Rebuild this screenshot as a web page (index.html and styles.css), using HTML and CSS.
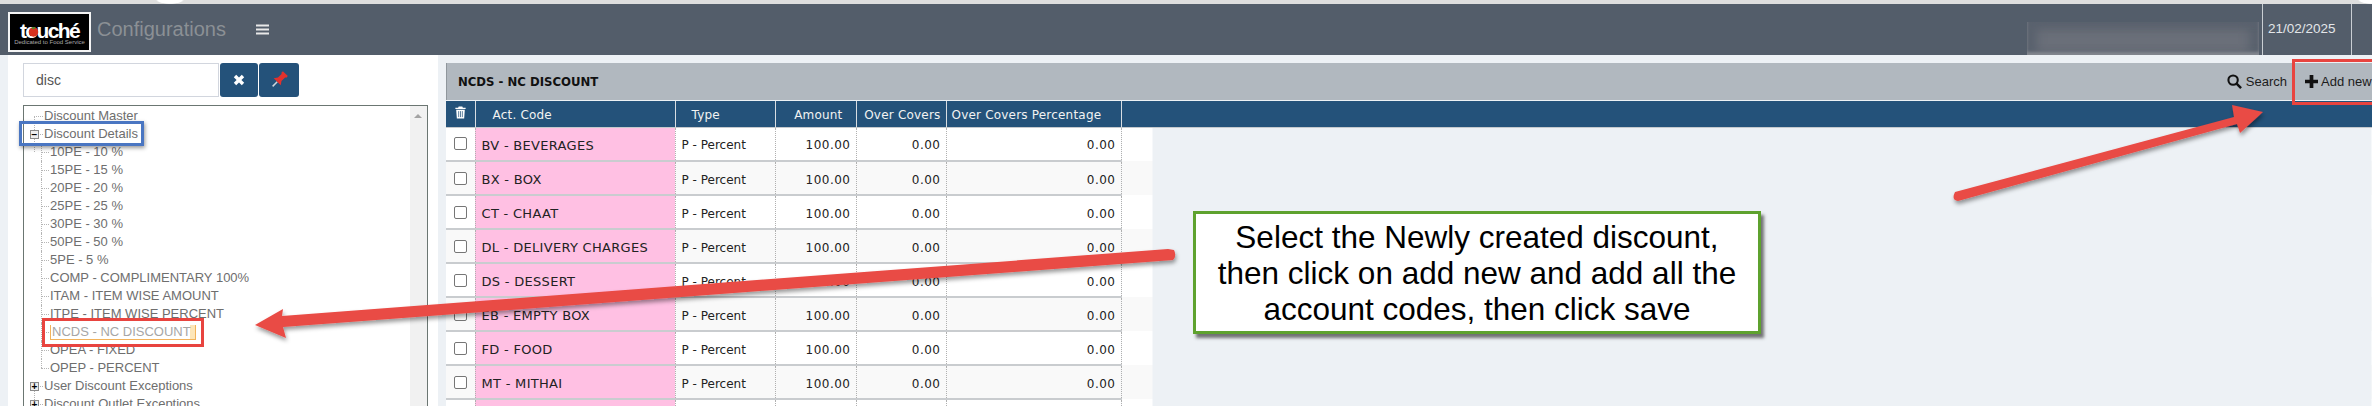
FILE: index.html
```html
<!DOCTYPE html>
<html lang="en">
<head>
    <meta charset="UTF-8">
    <title>Configurations</title>
    <link rel="stylesheet" href="styles.css">
</head>
<body>
    <div class="topstrip"></div>
    <nav class="navbar">
        <div class="logo">
            <span class="logo-name">touché</span>
            <span class="logo-sub">Dedicated to Food Service</span>
            <svg class="logo-tomato" viewBox="0 0 12 12"><circle cx="6" cy="6.500" r="5.200" fill="#d8321f"/><path d="M3.500 2.500 L6 3.500 L8.500 2.500 L7 1.200 L5 1.200 Z" fill="#4f8a2a"/></svg>
        </div>
        <span class="nav-title">Configurations</span>
        <svg class="nav-burger" viewBox="0 0 13 11"><path d="M0 0.500h13v2h-13zM0 4.500h13v2h-13zM0 8.500h13v2h-13z" fill="#e8e8e8"/></svg>
        <div class="nav-right">
            <div class="nav-blur"></div>
            <div class="nav-date">21/02/2025</div>
            <div class="nav-end"></div>
        </div>
    </nav>

    <div class="main">
        <aside class="side">
            <div class="search-row">
                <input class="search-input" type="text" value="disc">
                <button class="icon-btn btn-clear">
                    <svg viewBox="0 0 12 12" width="12" height="12"><path d="M0.800 3.200 L3.200 0.800 L6 3.600 L8.800 0.800 L11.200 3.200 L8.400 6 L11.200 8.800 L8.800 11.200 L6 8.400 L3.200 11.200 L0.800 8.800 L3.600 6 Z" fill="#fff"/></svg>
                </button>
                <button class="icon-btn btn-pin">
                    <svg viewBox="0 0 18 18" width="18" height="18">
                        <g transform="rotate(45 9 9)">
                            <path d="M9 11.500V18" stroke="#cfd6dc" stroke-width="1.500"/>
                            <path d="M5.500 0h7v2.500h-1V8l2.500 3.500H4L6.500 8V2.500h-1z" fill="#e2312d"/>
                        </g>
                    </svg>
                </button>
            </div>
            <div class="tree-box">
                <ul class="tree">
                    <li class="node"><span class="hline"></span>Discount Master</li>
                    <li class="node"><span class="toggle">−</span><span class="hline"></span>Discount Details</li>
                    <li class="child">10PE - 10 %</li>
                    <li class="child">15PE - 15 %</li>
                    <li class="child">20PE - 20 %</li>
                    <li class="child">25PE - 25 %</li>
                    <li class="child">30PE - 30 %</li>
                    <li class="child">50PE - 50 %</li>
                    <li class="child">5PE - 5 %</li>
                    <li class="child">COMP - COMPLIMENTARY 100%</li>
                    <li class="child">ITAM - ITEM WISE AMOUNT</li>
                    <li class="child">ITPE - ITEM WISE PERCENT</li>
                    <li class="child"><span class="selected">NCDS - NC DISCOUNT</span></li>
                    <li class="child">OPEA - FIXED</li>
                    <li class="child last">OPEP - PERCENT</li>
                    <li class="node"><span class="toggle">+</span><span class="hline"></span>User Discount Exceptions</li>
                    <li class="node"><span class="toggle">+</span><span class="hline"></span>Discount Outlet Exceptions</li>
                </ul>
                <div class="scrollbar"><span class="scroll-up"></span></div>
            </div>
        </aside>

        <section class="content">
            <div class="panel-title">
                <span class="panel-name">NCDS - NC DISCOUNT</span>
                <span class="tool tool-search">
                    <svg viewBox="0 0 16 16" width="15" height="15"><circle cx="6.500" cy="6.500" r="5" fill="none" stroke="#111" stroke-width="2.200"/><path d="M10.200 10.200 L15 15" stroke="#111" stroke-width="2.600"/></svg>
                    Search
                </span>
                <span class="tool tool-add">
                    <svg viewBox="0 0 14 14" width="13" height="13"><path d="M5 0h4v5h5v4h-5v5h-4v-5h-5v-4h5z" fill="#111"/></svg>
                    Add new
                </span>
            </div>
            <table class="grid">
                <thead>
                    <tr>
                        <th class="c-check">
                            <svg viewBox="0 0 12 14" width="11" height="13">
                                <path d="M4 0.500h4l0.600 1.300h3v1.400h-11.200v-1.400h3zM1.300 4h9.400l-0.700 9.500h-8z" fill="#fff"/>
                                <path d="M4 5.500v6.500M6 5.500v6.500M8 5.500v6.500" stroke="#24527a" stroke-width="0.800"/>
                            </svg>
                        </th>
                        <th class="c-code">Act. Code</th>
                        <th class="c-type">Type</th>
                        <th class="c-num c-amount">Amount</th>
                        <th class="c-num c-over">Over Covers</th>
                        <th class="c-pct">Over Covers Percentage</th>
                        <th class="c-fill"></th>
                    </tr>
                </thead>
                <tbody id="rows">
                    <tr><td class="c-check"><span class="box"></span></td><td class="c-code">BV - BEVERAGES</td><td>P - Percent</td><td class="c-num">100.00</td><td class="c-num">0.00</td><td class="c-num">0.00</td><td class="c-pad"></td></tr>
                    <tr><td class="c-check"><span class="box"></span></td><td class="c-code">BX - BOX</td><td>P - Percent</td><td class="c-num">100.00</td><td class="c-num">0.00</td><td class="c-num">0.00</td><td class="c-pad"></td></tr>
                    <tr><td class="c-check"><span class="box"></span></td><td class="c-code">CT - CHAAT</td><td>P - Percent</td><td class="c-num">100.00</td><td class="c-num">0.00</td><td class="c-num">0.00</td><td class="c-pad"></td></tr>
                    <tr><td class="c-check"><span class="box"></span></td><td class="c-code">DL - DELIVERY CHARGES</td><td>P - Percent</td><td class="c-num">100.00</td><td class="c-num">0.00</td><td class="c-num">0.00</td><td class="c-pad"></td></tr>
                    <tr><td class="c-check"><span class="box"></span></td><td class="c-code">DS - DESSERT</td><td>P - Percent</td><td class="c-num">100.00</td><td class="c-num">0.00</td><td class="c-num">0.00</td><td class="c-pad"></td></tr>
                    <tr><td class="c-check"><span class="box"></span></td><td class="c-code">EB - EMPTY BOX</td><td>P - Percent</td><td class="c-num">100.00</td><td class="c-num">0.00</td><td class="c-num">0.00</td><td class="c-pad"></td></tr>
                    <tr><td class="c-check"><span class="box"></span></td><td class="c-code">FD - FOOD</td><td>P - Percent</td><td class="c-num">100.00</td><td class="c-num">0.00</td><td class="c-num">0.00</td><td class="c-pad"></td></tr>
                    <tr><td class="c-check"><span class="box"></span></td><td class="c-code">MT - MITHAI</td><td>P - Percent</td><td class="c-num">100.00</td><td class="c-num">0.00</td><td class="c-num">0.00</td><td class="c-pad"></td></tr>
                    <tr><td class="c-check"><span class="box"></span></td><td class="c-code">&nbsp;</td><td></td><td></td><td></td><td></td><td class="c-pad"></td></tr>
                </tbody>
            </table>
        </section>
    </div>

    <!-- annotations drawn over the screenshot -->
    <div class="mark mark-blue"></div>
    <div class="mark mark-red-node"></div>
    <div class="mark mark-red-add"></div>
    <svg class="arrows" viewBox="0 0 2372 406" width="2372" height="406">
        <defs>
            <filter id="arrowShadow" x="-5%" y="-50%" width="110%" height="200%">
                <feDropShadow dx="1" dy="3" stdDeviation="2" flood-color="#000" flood-opacity="0.4"/>
            </filter>
        </defs>
        <g filter="url(#arrowShadow)" fill="#e94b45">
            <path d="M1174 250 Q1177 256 1173 260 L283 327 L286 338 L255 325 L283 309 L282 316 L1168 249 Z"/>
            <path d="M1955 192 L2234 117 L2232 105 L2263 112 L2240 133 L2237 124 L1958 201 Q1951 200 1955 192 Z"/>
        </g>
    </svg>
    <div class="callout">Select the Newly created discount,<br>then click on add new and add all the<br>account codes, then click save</div>
</body>
</html>
```

FILE: styles.css
```css
html, body {
    margin: 0;
    padding: 0;
}
body {
    width: 2372px;
    height: 406px;
    overflow: hidden;
    position: relative;
    font-family: "Liberation Sans", Arial, sans-serif;
    background-color: #edf1f5;
}
.topstrip {
    height: 4px;
    background-color: #dedede;
    background-image: radial-gradient(ellipse 14px 4px at 170px 0, #fff 85%, transparent 100%), radial-gradient(ellipse 14px 4px at 2372px 0, #fff 85%, transparent 100%);
}
.navbar {
    height: 51px;
    background-color: #535d6a;
    display: flex;
    align-items: center;
    padding-left: 8px;
    box-sizing: border-box;
}
.logo {
    width: 83px;
    height: 40px;
    margin-top: 5px;
    box-sizing: border-box;
    background-color: #000;
    border: 2px solid #f4f4f4;
    position: relative;
    color: #fff;
    text-align: center;
    flex: none;
}
.logo-name {
    display: block;
    font-size: 21px;
    font-weight: bold;
    line-height: 20px;
    margin-top: 7px;
    letter-spacing: -1.6px;
}
.logo-sub {
    display: block;
    font-size: 6px;
    line-height: 6px;
    margin-top: -2px;
    color: #aaa;
    white-space: nowrap;
}
.logo-tomato {
    position: absolute;
    left: 18px;
    top: 12px;
    width: 11px;
    height: 11px;
}
.nav-title {
    margin-left: 6px;
    font-size: 20px;
    color: #8b9095;
}
.nav-burger {
    margin-left: 30px;
    width: 13px;
    height: 11px;
}
.nav-right {
    margin-left: auto;
    height: 100%;
    display: flex;
    align-items: stretch;
}
.nav-blur {
    width: 232px;
    height: 33px;
    align-self: flex-end;
    margin-right: 3px;
    background-color: #6a6f79;
    box-shadow: inset 0 -3px 3px #83878f, inset 10px 0 10px #5a626e, inset -10px 0 10px #5a626e, inset 0 7px 8px #5c636f;
}
.nav-date {
    width: 90px;
    box-sizing: border-box;
    border-left: 1px solid #c9ced3;
    border-right: 1px solid #c9ced3;
    padding-left: 5px;
    font-size: 13.500px;
    color: #e3e6e9;
    line-height: 50px;
}
.nav-end {
    width: 20px;
}
.main {
    display: flex;
    height: 351px;
    overflow: hidden;
}
.side {
    width: 430px;
    margin-left: 8px;
    flex: none;
    background-color: #fff;
    padding: 8px 10px 0 15px;
    box-sizing: border-box;
}
.search-row {
    display: flex;
    gap: 1px;
    height: 34px;
}
.search-input {
    width: 196px;
    box-sizing: border-box;
    border: 1px solid #d2d6de;
    padding: 0 12px;
    font-family: "Liberation Sans", Arial, sans-serif;
    font-size: 14px;
    color: #555;
    background-color: #fff;
    outline: none;
}
.icon-btn {
    border: 0;
    padding: 0;
    background-color: #24527a;
    border-radius: 3px;
    display: flex;
    align-items: center;
    justify-content: center;
}
.btn-clear {
    width: 38px;
}
.btn-pin {
    width: 40px;
}
.tree-box {
    margin-top: 8px;
    width: 405px;
    height: 320px;
    box-sizing: border-box;
    border: 1px solid #6b7672;
    display: flex;
    overflow: hidden;
}
.tree {
    flex: 1;
    list-style: none;
    margin: 0;
    padding: 1px 0 0 0;
    font-size: 13px;
    color: #6e6e6e;
}
.tree li {
    height: 18px;
    line-height: 18px;
    white-space: nowrap;
    position: relative;
}
.node {
    padding-left: 20px;
}
.child {
    padding-left: 26px;
}
.hline {
    position: absolute;
    left: 10px;
    top: 9px;
    width: 9px;
    border-top: 1px dotted #b5b5b5;
}
.node::before {
    content: "";
    position: absolute;
    left: 10px;
    top: 9px;
    height: 18px;
    border-left: 1px dotted #b5b5b5;
}
.child::before {
    content: "";
    position: absolute;
    left: 17px;
    top: 0;
    height: 18px;
    border-left: 1px dotted #b5b5b5;
}
.child.last::before {
    height: 9px;
}
.child::after {
    content: "";
    position: absolute;
    left: 17px;
    top: 9px;
    width: 8px;
    border-top: 1px dotted #b5b5b5;
}
.toggle {
    position: absolute;
    left: 6px;
    top: 5px;
    width: 9px;
    height: 9px;
    box-sizing: border-box;
    border: 1px solid #8a8a8a;
    background-color: #eee;
    color: #000;
    font-size: 10px;
    font-weight: bold;
    line-height: 7px;
    text-align: center;
    z-index: 1;
}
.selected {
    display: inline-block;
    width: 146px;
    height: 15px;
    line-height: 14px;
    box-sizing: border-box;
    border-left: 1px solid #f2b35a;
    border-right: 1px solid #f2b35a;
    border-bottom: 1px solid #f2b35a;
    padding-left: 1px;
    color: #a6a6a6;
    background: linear-gradient(90deg, #fff 0, #fff 139px, #fde6b8 139px);
    vertical-align: top;
    margin-top: 2px;
}
.scrollbar {
    width: 17px;
    background-color: #f1f1f1;
    position: relative;
    flex: none;
}
.scroll-up {
    position: absolute;
    left: 4px;
    top: 8px;
    border-left: 4px solid transparent;
    border-right: 4px solid transparent;
    border-bottom: 4px solid #a3a3a3;
}
.content {
    margin-left: 8px;
    padding-top: 8px;
    flex: 1;
    min-width: 0;
}
.panel-title {
    height: 37px;
    background-color: #b1b8bf;
    border-left: 1px solid #8f969c;
    display: flex;
    align-items: center;
    padding-left: 11px;
    box-sizing: border-box;
}
.panel-name {
    font-family: "DejaVu Sans Condensed", "DejaVu Sans", sans-serif;
    font-size: 13px;
    font-weight: bold;
    color: #111;
    margin-right: auto;
}
.tool {
    display: flex;
    align-items: center;
    gap: 4px;
    font-size: 13px;
    color: #1c1c1c;
    white-space: nowrap;
}
.tool-add {
    margin-left: 18px;
    width: 67px;
    overflow: hidden;
    flex: none;
    gap: 3px;
}
.grid {
    width: 100%;
    table-layout: fixed;
    border-collapse: collapse;
    font-family: "DejaVu Sans", sans-serif;
    font-size: 12px;
    color: #222;
    margin-top: 1px;
}
.grid th {
    height: 26px;
    padding: 2px 5px 0;
    background-color: #24527a;
    color: #f2f2f2;
    font-weight: normal;
    text-align: left;
    letter-spacing: 0.200px;
    border-right: 1px solid #d8dde2;
    border-bottom: 1px solid #c5c9cd;
    white-space: nowrap;
    box-sizing: border-box;
}
.grid th.c-fill {
    border-right: 0;
}
.grid td {
    height: 34px;
    padding: 3px 5px 0 6px;
    border-right: 1px dotted #b0b0b0;
    border-bottom: 2px solid #c9cccf;
    background-color: #fff;
    white-space: nowrap;
    box-sizing: border-box;
}
.grid tbody tr:nth-child(even) td {
    background-color: #f9f9f9;
}
.grid td.c-pad {
    border: 0;
    background: linear-gradient(90deg, #fff 0, #fff 31px, #edf1f5 31px);
}
.grid tbody tr:nth-child(even) td.c-pad {
    background: linear-gradient(90deg, #f9f9f9 0, #f9f9f9 31px, #edf1f5 31px);
}
.c-check {
    width: 29px;
}
.grid th.c-check {
    text-align: center;
    padding: 0;
    vertical-align: middle;
}
.grid td.c-check {
    padding: 0 0 0 8px;
}
.c-code {
    width: 200px;
}
.grid th.c-code {
    padding-left: 17px;
}
.grid th.c-type {
    width: 100px;
    padding-left: 16px;
}
.c-amount {
    width: 81px;
}
.c-over {
    width: 90px;
}
.c-pct {
    width: 175px;
}
.c-num {
    text-align: right;
}
.grid td.c-num {
    letter-spacing: 0.500px;
}
.grid th.c-num {
    text-align: right;
}
.grid th.c-amount {
    padding-right: 13px;
}
.grid td.c-code {
    background-color: #ffc0e3;
    font-size: 13px;
    letter-spacing: 0.300px;
}
.grid tbody tr:nth-child(even) td.c-code {
    background-color: #ffc0e3;
}
.box {
    display: block;
    width: 13px;
    height: 13px;
    box-sizing: border-box;
    border: 1px solid #767676;
    border-radius: 2px;
    background-color: #fff;
}
.mark {
    position: absolute;
    box-sizing: border-box;
    border-style: solid;
    border-width: 3px;
}
.mark-blue {
    left: 19px;
    top: 121px;
    width: 125px;
    height: 25px;
    border-color: #4a76c2;
    box-shadow: 1px 2px 4px rgba(0, 0, 0, 0.4);
}
.mark-red-node {
    left: 42px;
    top: 318px;
    width: 162px;
    height: 29px;
    border-color: #e8443f;
}
.mark-red-add {
    left: 2292px;
    top: 59px;
    width: 80px;
    height: 46px;
    border-color: #e8443f;
    border-right: 0;
}
.arrows {
    position: absolute;
    left: 0;
    top: 0;
}
.callout {
    position: absolute;
    left: 1193px;
    top: 211px;
    width: 568px;
    height: 123px;
    box-sizing: border-box;
    border: 3px solid #5ea22e;
    background-color: #fff;
    box-shadow: 3px 4px 3px rgba(60, 60, 60, 0.7);
    text-align: center;
    font-size: 31.500px;
    line-height: 36px;
    color: #000;
    padding-top: 5px;
}
```
